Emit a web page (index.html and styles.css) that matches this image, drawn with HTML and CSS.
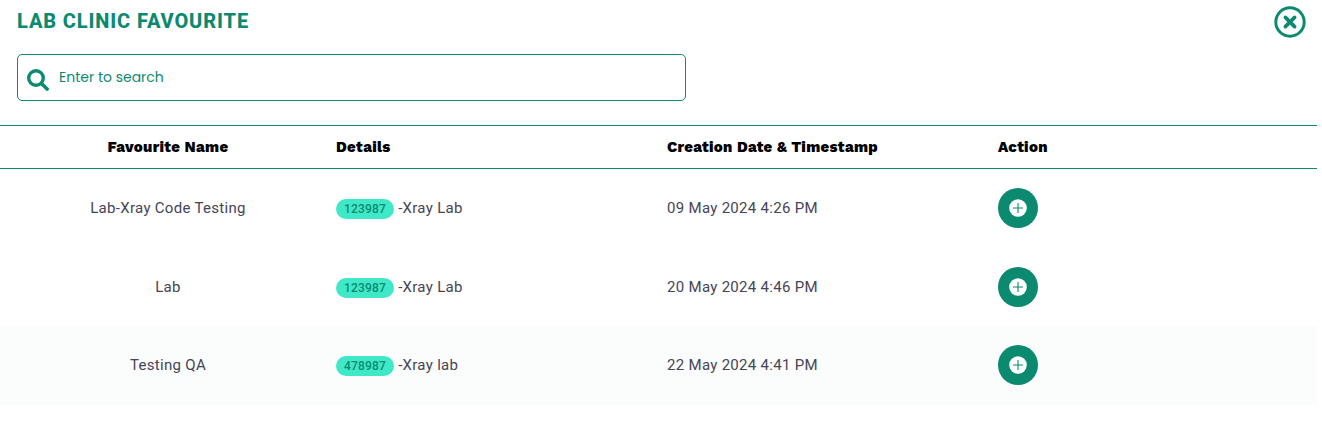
FILE: index.html
```html
<!DOCTYPE html>
<html lang="en">

<head>
    <meta charset="UTF-8">
    <meta name="viewport" content="width=device-width, initial-scale=1.0">
    <title>Lab Clinic Favourite</title>
    <link rel="stylesheet" href="styles.css">
</head>

<body>
    <div class="header">
        <h1>LAB CLINIC FAVOURITE</h1>
        <button class="close-button" aria-label="Close">
            <svg width="32" height="32" viewBox="0 0 32 32" fill="none" stroke="currentColor">
                <circle cx="16" cy="16" r="14.2" stroke-width="3" />
                <path d="M11.4 11.4l9.2 9.2M20.6 11.4l-9.2 9.2" stroke-width="3.7" stroke-linecap="round" />
            </svg>
        </button>
    </div>

    <div class="search-box">
        <svg class="search-icon" width="22" height="22" viewBox="0 0 22 22" fill="none" stroke="currentColor">
            <circle cx="9" cy="9" r="7.3" stroke-width="3.4" />
            <path d="M14.5 14.5l5.600 5.600" stroke-width="3.600" stroke-linecap="round" />
        </svg>
        <input type="text" placeholder="Enter to search">
    </div>

    <table class="favourite-table">
        <thead>
            <tr>
                <th class="name-col">Favourite Name</th>
                <th class="details-col">Details</th>
                <th class="date-col">Creation Date &amp; Timestamp</th>
                <th>Action</th>
            </tr>
        </thead>
        <tbody id="favourite-rows"></tbody>
    </table>

    <script>
        const favourites = [
            { name: "Lab-Xray Code Testing", code: "123987", detail: "-Xray Lab", date: "09 May 2024 4:26 PM" },
            { name: "Lab", code: "123987", detail: "-Xray Lab", date: "20 May 2024 4:46 PM" },
            { name: "Testing QA", code: "478987", detail: "-Xray lab", date: "22 May 2024 4:41 PM", active: true }
        ];

        const rows = document.getElementById("favourite-rows");

        favourites.forEach(fav => {
            rows.innerHTML += `
                <tr class="${fav.active ? "active" : ""}">
                    <td class="name-col">${fav.name}</td>
                    <td class="details-cell"><span class="badge">${fav.code}</span><span>${fav.detail}</span></td>
                    <td>${fav.date}</td>
                    <td>
                        <button class="add-button" aria-label="Add">
                            <svg width="18" height="18" viewBox="0 0 18 18">
                                <circle cx="9" cy="9" r="8.8" fill="#fff" />
                                <path d="M9 4v10M4 9h10" stroke="#0c8a70" stroke-width="1.1" />
                            </svg>
                        </button>
                    </td>
                </tr>
            `;
        });
    </script>
</body>

</html>
```
FILE: styles.css
```css
body {
    font-family: Roboto, "Liberation Sans", sans-serif;
    margin: 0;
    background-color: #fff;
    color: #464457;
}

button {
    border: none;
    padding: 0;
    cursor: pointer;
}

.header {
    display: flex;
    justify-content: space-between;
    align-items: flex-start;
    height: 48px;
    padding: 6px 16px 0 17px;
    box-sizing: border-box;
    color: #0c8a70;
}

.header h1 {
    margin: 3px 0 0;
    font-size: 20px;
    line-height: 24px;
    font-weight: 800;
    letter-spacing: 0.87px;
}

.close-button {
    display: flex;
    background: none;
    color: #0c8a70;
}

.search-box {
    display: flex;
    align-items: center;
    width: 669px;
    height: 47px;
    margin: 6px 0 24px 17px;
    padding: 0 9px;
    box-sizing: border-box;
    border: 1px solid #0c8a70;
    border-radius: 5px;
    color: #0c8a70;
}

.search-icon {
    margin-top: 4px;
}

.search-box input {
    flex: 1;
    margin-left: 10px;
    padding: 0;
    border: none;
    outline: none;
    background: none;
    font-family: Poppins, Inter, sans-serif;
    font-size: 14px;
    color: #0c8a70;
}

.search-box input::placeholder {
    color: #0c8a70;
}

.favourite-table {
    width: 1317px;
    table-layout: fixed;
    border-collapse: separate;
    border-spacing: 0;
    font-size: 15px;
    letter-spacing: 0.3px;
}

.favourite-table th {
    height: 42px;
    padding: 0;
    border-top: 1px solid #0c8a70;
    border-bottom: 1px solid #0c8a70;
    font-family: "Work Sans", "Open Sans", sans-serif;
    font-size: 15px;
    font-weight: 800;
    letter-spacing: 0.3px;
    text-align: left;
    color: #000;
}

.favourite-table td {
    height: 78.6px;
    padding: 0;
}

.favourite-table .name-col {
    width: 336px;
    text-align: center;
}

.favourite-table .details-col,
.favourite-table .date-col {
    width: 331px;
}

.favourite-table .details-cell {
    padding-top: 2px;
    height: 76.6px;
}

.active td {
    background-color: #fbfdfc;
}

.badge {
    display: inline-block;
    height: 20px;
    margin-right: 4px;
    padding: 0 8px;
    border-radius: 10px;
    background-color: #3fe9c8;
    color: #0c8a70;
    font-size: 12px;
    font-weight: 500;
    line-height: 20px;
    letter-spacing: 0.2px;
}

.add-button {
    display: flex;
    align-items: center;
    justify-content: center;
    width: 40px;
    height: 40px;
    border-radius: 50%;
    background-color: #0c8a70;
}
```
